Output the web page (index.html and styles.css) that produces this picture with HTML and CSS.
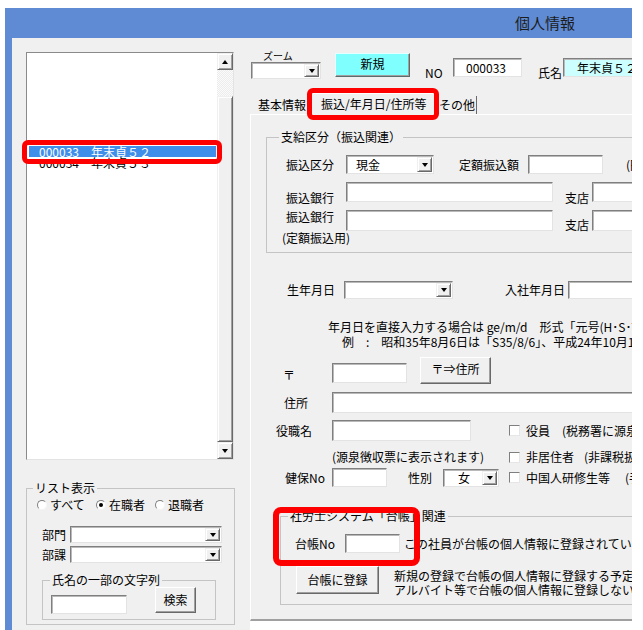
FILE: index.html
```html
<!DOCTYPE html>
<html lang="ja">
<head>
    <meta charset="UTF-8">
    <meta name="viewport" content="width=device-width, initial-scale=1.0">
    <title>個人情報</title>
    <link rel="stylesheet" href="styles.css">
</head>
<body>

<div class="window">
    <div class="titlebar"><span class="title">個人情報</span></div>

    <div class="client">
        <!-- left: employee list + filter -->
        <div class="side">
            <div class="listbox">
                <div class="list-items">
                    <div class="list-row selected">000033　年末貞５２</div>
                    <div class="list-row">000034　年末貞５３</div>
                </div>
                <div class="vscroll">
                    <div class="sb-btn"><span class="arrow up"></span></div>
                    <div class="sb-track"></div>
                    <div class="sb-thumb"></div>
                    <div class="sb-btn"><span class="arrow down"></span></div>
                </div>
                <div class="mark mark-row"></div>
            </div>

            <fieldset class="group filter">
                <legend>リスト表示</legend>
                <div class="radios">
                    <label class="radio"><span class="dot"></span>すべて</label>
                    <label class="radio on"><span class="dot"></span>在職者</label>
                    <label class="radio"><span class="dot"></span>退職者</label>
                </div>
                <div class="combo-row first">
                    <span class="lbl dept-lbl">部門</span>
                    <div class="combo dept-combo"><span class="value"></span><span class="drop"></span></div>
                </div>
                <div class="combo-row">
                    <span class="lbl dept-lbl">部課</span>
                    <div class="combo dept-combo"><span class="value"></span><span class="drop"></span></div>
                </div>
                <fieldset class="group name-search">
                    <legend>氏名の一部の文字列</legend>
                    <div class="search-row">
                        <div class="text search-text"></div>
                        <div class="btn search-btn">検索</div>
                    </div>
                </fieldset>
            </fieldset>
        </div>

        <!-- right: header fields + tab page -->
        <div class="main">
            <div class="toolbar">
                <div class="zoom">
                    <span class="zoom-label">ズーム</span>
                    <div class="combo zoom-combo"><span class="value"></span><span class="drop"></span></div>
                </div>
                <div class="btn btn-new">新規</div>
                <span class="tb-label no-label">NO</span>
                <div class="text no-text">000033</div>
                <span class="tb-label name-label">氏名</span>
                <div class="text name-text">年末貞５２</div>
            </div>

            <div class="tabstrip">
                <div class="tab tab-basic">基本情報</div>
                <div class="tab tab-active">振込/年月日/住所等</div>
                <div class="tab tab-other">その他</div>
                <div class="mark mark-tab"></div>
            </div>

            <div class="page">
                <fieldset class="group pay">
                    <legend>支給区分（振込関連）</legend>
                    <div class="row pay-row1">
                        <span class="lbl pay-lbl">振込区分</span>
                        <div class="combo pay-combo"><span class="value">現金</span><span class="drop"></span></div>
                        <span class="lbl fixed-lbl">定額振込額</span>
                        <div class="text fixed-text"></div>
                        <span class="lbl paren">(円)</span>
                    </div>
                    <div class="row pay-row2">
                        <span class="lbl pay-lbl low">振込銀行</span>
                        <div class="text bank-text"></div>
                        <span class="lbl branch-lbl low">支店</span>
                        <div class="text branch-text"></div>
                    </div>
                    <div class="row pay-row3">
                        <span class="lbl pay-lbl">振込銀行</span>
                        <div class="text bank-text"></div>
                        <span class="lbl branch-lbl branch-down">支店</span>
                        <div class="text branch-text"></div>
                    </div>
                    <div class="pay-note">(定額振込用)</div>
                </fieldset>

                <div class="row birth-row">
                    <span class="lbl birth-lbl">生年月日</span>
                    <div class="combo birth-combo"><span class="value"></span><span class="drop"></span></div>
                    <span class="lbl join-lbl">入社年月日</span>
                    <div class="text join-text"></div>
                </div>

                <div class="hint">
                    <div class="hint-1">年月日を直接入力する場合は ge/m/d　形式「元号(H･S･T･M)年/月/日」で入力</div>
                    <div class="hint-2">例　:　昭和35年8月6日は「S35/8/6」、平成24年10月1日は「H24/10/1」</div>
                </div>

                <div class="row post-row">
                    <span class="lbl post-lbl">〒</span>
                    <div class="text post-text"></div>
                    <div class="btn post-btn">〒⇒住所</div>
                </div>

                <div class="row addr-row">
                    <span class="lbl addr-lbl">住所</span>
                    <div class="text addr-text"></div>
                </div>

                <div class="row role-row">
                    <span class="lbl role-lbl">役職名</span>
                    <div class="text role-text"></div>
                    <div class="check-item role-check">
                        <span class="check"></span>
                        <span class="check-text">役員</span>
                        <span class="check-note">(税務署に源泉徴収票を提出)</span>
                    </div>
                </div>

                <div class="row note-row">
                    <span class="lbl role-note">(源泉徴収票に表示されます)</span>
                    <div class="check-item">
                        <span class="check"></span>
                        <span class="check-text">非居住者</span>
                        <span class="check-note nonres-note">(非課税扱い)</span>
                    </div>
                </div>

                <div class="row health-row">
                    <span class="lbl health-lbl">健保No</span>
                    <div class="text health-text"></div>
                    <span class="lbl sex-lbl">性別</span>
                    <div class="combo sex-combo"><span class="value">女</span><span class="drop"></span></div>
                    <div class="check-item sex-check">
                        <span class="check"></span>
                        <span class="check-text">中国人研修生等</span>
                        <span class="check-note">(手当は非課税)</span>
                    </div>
                </div>

                <fieldset class="group ledger">
                    <legend>社労士システム「台帳」関連</legend>
                    <div class="row ledger-row1">
                        <span class="lbl ledger-lbl">台帳No</span>
                        <div class="text ledger-text"></div>
                        <span class="lbl ledger-desc">この社員が台帳の個人情報に登録されている場合はその番号</span>
                    </div>
                    <div class="row ledger-row2">
                        <div class="btn ledger-btn">台帳に登録</div>
                        <div class="ledger-desc2">
                            <div>新規の登録で台帳の個人情報に登録する予定の場合は押す</div>
                            <div>アルバイト等で台帳の個人情報に登録しない場合は空欄</div>
                        </div>
                    </div>
                </fieldset>

                <div class="mark mark-ledger"></div>
            </div>
            <div class="foot"></div>
        </div>
    </div>
</div>

</body>
</html>
```

FILE: styles.css
```css
/* --- Global Setup --- */
* { box-sizing: border-box; }

body {
    margin: 0;
    background: #fff;
    overflow: hidden;
    font-family: "Noto Sans CJK JP", "Noto Sans", sans-serif;
    font-size: 12px;
    line-height: 14px;
    color: #000;
}

/* --- Window frame --- */
.window {
    margin: 8px 0 0 5px;
    width: 627px;
    height: 622px;
    background: #5f8bd4;
    overflow: hidden;
    display: flex;
    flex-direction: column;
}
.titlebar {
    flex: none;
    height: 30px;
    display: flex;
    align-items: center;
    padding-left: 510px;
}
.title { font-size: 15px; color: #1c1c1c; }

.client {
    flex: 1;
    min-height: 0;
    margin-left: 7px;
    background: #f0f0f0;
    display: flex;
}

/* --- Common controls --- */
.lbl { flex: none; line-height: 14px; white-space: nowrap; }

.text {
    flex: none;
    background: #fff;
    border: 1px solid;
    border-color: #7f7f7f #e3e3e3 #e3e3e3 #7f7f7f;
    box-shadow: inset 1px 1px 0 #b9b9b9;
    white-space: nowrap;
    overflow: hidden;
}

.btn {
    flex: none;
    background: #f0f0f0;
    border: 1px solid;
    border-color: #fff #696969 #696969 #fff;
    box-shadow: inset -1px -1px 0 #a0a0a0;
    display: flex;
    align-items: center;
    justify-content: center;
    white-space: nowrap;
}

.combo {
    flex: none;
    background: #fff;
    border: 1px solid;
    border-color: #7f7f7f #e3e3e3 #e3e3e3 #7f7f7f;
    box-shadow: inset 1px 1px 0 #b9b9b9;
    display: flex;
    align-items: stretch;
}
.combo .value { flex: 1; display: flex; align-items: center; white-space: nowrap; }
.combo .drop {
    flex: none;
    width: 15px;
    margin: 1px 1px 1px 0;
    background: #f0f0f0;
    border: 1px solid;
    border-color: #f0f0f0 #696969 #696969 #f0f0f0;
    box-shadow: inset 1px 1px 0 #fff, inset -1px -1px 0 #a0a0a0;
    display: flex;
    align-items: center;
    justify-content: center;
}
.combo .drop::after {
    content: "";
    border-left: 3.5px solid transparent;
    border-right: 3.5px solid transparent;
    border-top: 4px solid #000;
}

.group {
    margin: 0;
    padding: 0;
    min-width: 0;
    border: 1px solid #c4c4c4;
}
.group legend { padding: 0 2px; line-height: 14px; white-space: nowrap; }

.row { display: flex; flex: none; white-space: nowrap; }

.check {
    flex: none;
    width: 11px;
    height: 11px;
    background: #fff;
    border: 1px solid;
    border-color: #7f7f7f #e6e6e6 #e6e6e6 #7f7f7f;
}
.check-item { flex: none; display: flex; align-items: center; }
.check-text { margin-left: 6px; }
.check-note { margin-left: 12px; }

/* annotation boxes */
.mark {
    position: absolute;
    border: 5px solid #ff0000;
    border-radius: 6px;
    z-index: 5;
}

/* --- Left side --- */
.side {
    flex: none;
    width: 238px;
    padding: 14px 0 0 14px;
}

.listbox {
    position: relative;
    width: 208px;
    height: 408px;
    background: #fff;
    border: 1px solid;
    border-color: #8a8a8a #e3e3e3 #e3e3e3 #8a8a8a;
    display: flex;
}
.list-items { flex: 1; padding: 93px 0 0 2px; }
.list-row {
    width: 187px;
    height: 11px;
    line-height: 11px;
    padding-left: 10px;
    white-space: nowrap;
}
.list-row.selected { background: #3e8eea; color: #fff; position: relative; z-index: 1; }
.mark-row { left: -5px; top: 87px; width: 200px; height: 24px; }

.vscroll { flex: none; width: 16px; display: flex; flex-direction: column; }
.sb-btn, .sb-thumb {
    background: #f0f0f0;
    border: 1px solid;
    border-color: #f0f0f0 #696969 #696969 #f0f0f0;
    box-shadow: inset 1px 1px 0 #fff, inset -1px -1px 0 #a0a0a0;
}
.sb-btn { flex: none; height: 17px; display: flex; align-items: center; justify-content: center; }
.sb-track {
    flex: none;
    height: 26px;
    background: repeating-conic-gradient(#fbfbfb 0 25%, #ececec 0 50%) 0 0 / 2px 2px;
}
.sb-thumb { flex: 1; }
.arrow { border-left: 3.5px solid transparent; border-right: 3.5px solid transparent; }
.arrow.up { border-bottom: 4px solid #000; }
.arrow.down { border-top: 4px solid #000; }

.filter { width: 209px; margin-top: 21px; padding-bottom: 4px; }
.filter > legend { margin-left: 6px; }

.radios { display: flex; gap: 11px; margin: 2px 0 0 10px; height: 16px; }
.radio { width: 48px; display: flex; align-items: center; gap: 3px; white-space: nowrap; }
.radio .dot {
    flex: none;
    width: 10px;
    height: 10px;
    border-radius: 50%;
    background: #fff;
    border: 1px solid;
    border-color: #7f7f7f #f4f4f4 #f4f4f4 #7f7f7f;
    display: flex;
    align-items: center;
    justify-content: center;
}
.radio.on .dot::after { content: ""; width: 4px; height: 4px; border-radius: 50%; background: #000; }

.combo-row { display: flex; align-items: center; margin: 3px 0 0 15px; height: 17px; }
.combo-row.first { margin-top: 13px; }
.dept-lbl { width: 28px; }
.dept-combo { width: 152px; height: 17px; }

.name-search { width: 174px; margin: 10px 0 0 15px; padding-bottom: 5px; }
.name-search > legend { margin-left: 7px; }
.search-row { display: flex; align-items: flex-start; }
.search-text { width: 76px; height: 19px; margin: 8px 0 0 8px; }
.search-btn { width: 41px; height: 26px; margin-left: 28px; }

/* --- Right side --- */
.main {
    flex: none;
    width: 382px;
    display: flex;
    flex-direction: column;
}

.toolbar {
    flex: none;
    height: 54px;
    display: flex;
    align-items: flex-start;
    white-space: nowrap;
}
.zoom { display: flex; flex-direction: column; margin-left: 1px; }
.zoom-label { font-size: 10px; line-height: 10px; margin: 13px 0 0 12px; }
.zoom-combo { width: 70px; height: 17px; margin-top: 1px; }
.btn-new {
    width: 75px;
    height: 24px;
    margin: 15px 0 0 14px;
    padding-bottom: 3px;
    background: #80ffff;
    border-color: #e8ffff #5c6b6b #5c6b6b #e8ffff;
}
.tb-label { flex: none; margin-top: 28px; }
.no-label { width: 22px; margin-left: 15px; }
.no-text { width: 69px; height: 19px; margin: 20px 0 0 6px; padding-left: 12px; line-height: 17px; }
.name-label { width: 25px; margin-left: 16px; }
.name-text { width: 120px; height: 19px; margin-top: 20px; padding-left: 13px; line-height: 17px; background: #ccffff; }

.tabstrip {
    position: relative;
    flex: none;
    height: 22px;
    display: flex;
    align-items: flex-end;
    padding-left: 2px;
    white-space: nowrap;
}
.tab { flex: none; height: 19px; line-height: 19px; }
.tab-basic { width: 58px; padding-left: 6px; }
.tab-active {
    width: 125px;
    height: 22px;
    line-height: 20px;
    padding-left: 10px;
    border: 1px solid;
    border-color: #fff #696969 transparent #fff;
    margin-bottom: -1px;
    background: #f0f0f0;
    position: relative;
    z-index: 1;
}
.tab-other { width: 42px; height: 18px; line-height: 18px; padding-left: 4px; border-right: 1px solid #696969; }
.mark-tab { left: 57px; top: -4px; width: 132px; height: 32px; }

.page {
    position: relative;
    flex: none;
    height: 507px;
    border-top: 1px solid #fff;
    border-left: 1px solid #fff;
    border-bottom: 2px solid #a0a0a0;
}
.foot { flex: 1; background: #fff; }

/* payment group */
.pay { width: 420px; margin: 15px 0 0 15px; padding-bottom: 7px; }
.pay > legend { margin-left: 12px; }
.pay-row1 { margin-top: 11px; height: 19px; align-items: center; }
.pay-row2 { margin-top: 8px; height: 20px; align-items: flex-end; }
.pay-row3 { margin-top: 8px; height: 21px; align-items: flex-start; }
.pay-lbl { margin-left: 19px; width: 60px; }
.low { margin-bottom: -3px; }
.pay-combo { width: 88px; height: 19px; }
.pay-combo .value { padding-left: 9px; }
.fixed-lbl { margin-left: 25px; width: 69px; }
.fixed-text { width: 75px; height: 19px; }
.paren { margin-left: 23px; }
.bank-text { width: 207px; }
.pay-row2 .bank-text, .pay-row2 .branch-text { height: 20px; }
.pay-row3 .bank-text, .pay-row3 .branch-text { height: 21px; }
.branch-lbl { margin-left: 12px; width: 27px; }
.branch-down { margin-top: 8px; }
.branch-text { width: 80px; }
.pay-note { margin-left: 15px; }

/* birth / hint */
.birth-row { margin-top: 28px; height: 18px; align-items: center; }
.birth-lbl { margin-left: 36px; width: 57px; }
.birth-combo { width: 109px; height: 18px; }
.join-lbl { margin-left: 52px; width: 63px; }
.join-text { width: 80px; height: 18px; }

.hint { margin-top: 20px; line-height: 15px; white-space: nowrap; }
.hint-1 { margin-left: 77px; }
.hint-2 { margin-left: 91px; }

/* address block */
.post-row { margin-top: 8px; height: 27px; align-items: flex-end; }
.post-lbl { margin: 0 0 2px 32px; width: 49px; }
.post-text { width: 75px; height: 20px; margin-bottom: 1px; }
.post-btn { width: 71px; height: 27px; margin-left: 13px; padding-bottom: 4px; }

.addr-row { margin-top: 8px; height: 21px; align-items: center; }
.addr-lbl { margin-left: 33px; width: 48px; }
.addr-text { width: 330px; height: 21px; }

.role-row { margin-top: 7px; height: 21px; align-items: center; }
.role-lbl { margin-left: 25px; width: 56px; }
.role-text { width: 139px; height: 21px; }
.role-check { margin-left: 38px; }

.note-row { margin-top: 9px; height: 14px; align-items: center; }
.role-note { margin-left: 81px; width: 177px; }
.nonres-note { margin-left: 10px; }

.health-row { margin-top: 4px; height: 19px; align-items: center; }
.health-lbl { margin-left: 34px; width: 47px; }
.health-text { width: 55px; height: 19px; }
.sex-lbl { margin-left: 21px; width: 35px; }
.sex-combo { width: 56px; height: 18px; }
.sex-combo .value { padding-left: 14px; }
.sex-check { margin-left: 10px; }
.sex-check .check-note { margin-left: 15px; }

/* ledger group */
.ledger { width: 420px; margin: 22px 0 0 29px; padding-bottom: 10px; }
.ledger > legend { margin-left: 7px; }
.ledger-row1 { margin-top: 11px; height: 19px; align-items: center; }
.ledger-lbl { margin-left: 14px; width: 50px; }
.ledger-text { width: 55px; height: 19px; }
.ledger-desc { margin-left: 4px; }
.ledger-row2 { margin-top: 13px; height: 28px; align-items: flex-start; }
.ledger-btn { width: 83px; height: 28px; margin-left: 15px; }
.ledger-desc2 { margin: 3px 0 0 15px; line-height: 14px; }
.mark-ledger { left: 22px; top: 392px; width: 147px; height: 59px; border-width: 6px; border-radius: 8px; }
```
